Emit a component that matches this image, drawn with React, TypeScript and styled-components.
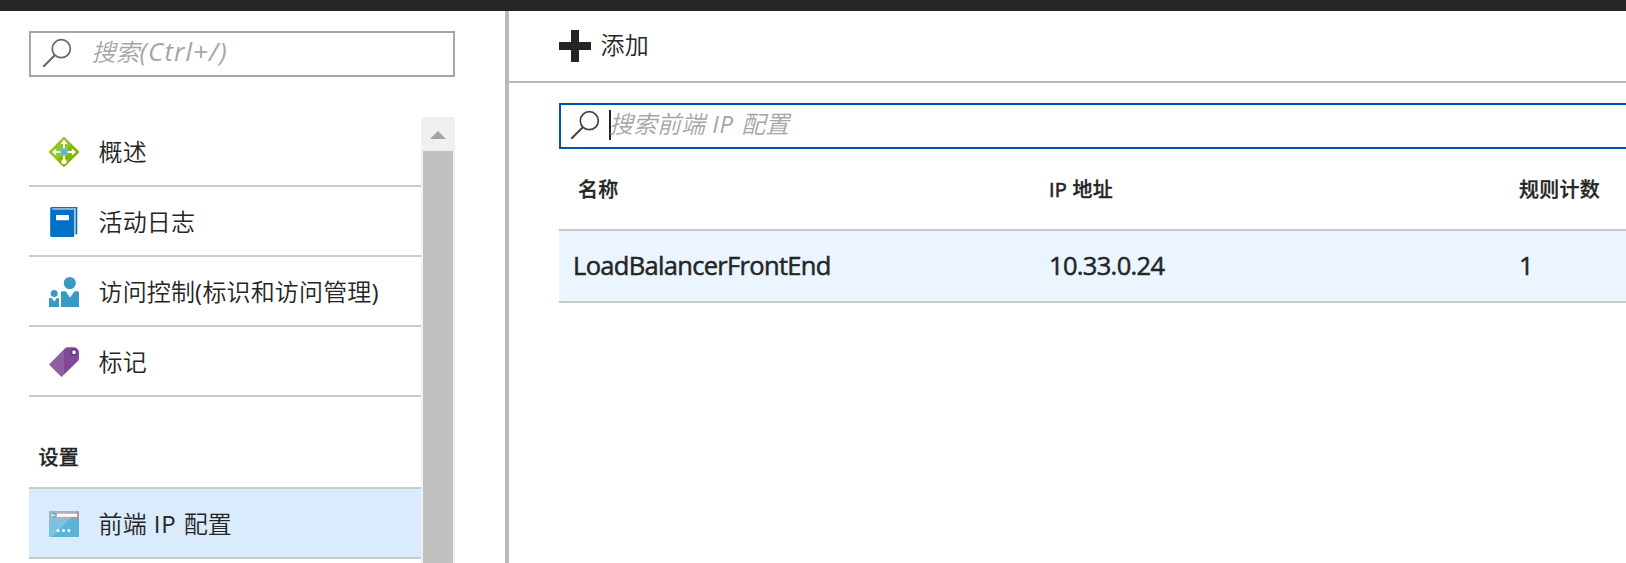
import React from "react";
import styled, { createGlobalStyle } from "styled-components";

const GlobalStyle = createGlobalStyle`
  * { box-sizing: border-box; }
  body {
    margin: 0;
    background: #fff;
    color: #252525;
    font-family: "Open Sans", "Noto Sans CJK SC", sans-serif;
    overflow: hidden;
  }
`;

const Page = styled.div`
  display: flex;
  flex-direction: column;
  width: 100%;
  height: 563px;
  overflow: hidden;
`;

const TopBar = styled.header`
  flex: 0 0 11px;
  background: #252525;
`;

const Body = styled.div`
  display: flex;
  flex: 1;
  min-height: 0;
`;

const Sidebar = styled.aside`
  display: flex;
  flex-direction: column;
  flex: 0 0 509px;
  padding: 20px 50px 0 29px;
  border-right: 4px solid #bababa;
`;

const SearchBox = styled.div<{ $focused?: boolean }>`
  display: flex;
  align-items: center;
  flex: 0 0 46px;
  border: 2px solid ${(p) => (p.$focused ? "#0055aa" : "#a6a6a6")};
  padding: 0 0 2px ${(p) => (p.$focused ? 9 : 11)}px;
  color: ${(p) => (p.$focused ? "#444" : "#666")};
`;

const Placeholder = styled.span<{ $gap: number }>`
  margin-left: ${(p) => p.$gap}px;
  padding-bottom: 2px;
  color: #a6a6a6;
  font-size: 24px;
  line-height: 30px;
  font-style: italic;
  font-weight: 350;
  white-space: pre;
`;

const Latin = styled.span<{ $spacing?: number; $size?: number }>`
  font-size: ${(p) => p.$size ?? 24}px;
  font-weight: 400;
  line-height: 1;
  letter-spacing: ${(p) => p.$spacing ?? 0}px;
`;

const Caret = styled.span`
  width: 2px;
  height: 30px;
  margin: 0 -2px 0 9px;
  background: #252525;
`;

const MenuArea = styled.div`
  display: flex;
  flex: 1;
  min-height: 0;
  margin-top: 40px;
`;

const Menu = styled.nav`
  flex: 1;
  overflow: hidden;
`;

const MenuItem = styled.div<{ $selected?: boolean }>`
  display: flex;
  align-items: center;
  gap: 19.5px;
  height: 70px;
  padding: 2px 0 0 20px;
  border-bottom: 2px solid #cacaca;
  background: ${(p) => (p.$selected ? "#d9ebfd" : "transparent")};
  font-size: 24px;
  line-height: 30px;
  font-weight: 350;
  letter-spacing: 0.15px;
  white-space: pre;
`;

const MenuHeading = styled.h2`
  margin: 0;
  height: 92px;
  padding: 46px 0 0 9.5px;
  border-bottom: 2px solid #cacaca;
  font-size: 20px;
  line-height: 30px;
  font-weight: 500;
  letter-spacing: 0.3px;
  -webkit-text-stroke: 0.3px #252525;
`;

const ScrollTrack = styled.div`
  display: flex;
  flex-direction: column;
  flex: 0 0 34px;
  padding: 0 2px;
  background: #f0f0f0;
`;

const ScrollButton = styled.div`
  display: flex;
  justify-content: center;
  flex: 0 0 34px;
  padding-top: 14px;
`;

const ScrollThumb = styled.div`
  flex: 1;
  background: #c1c1c1;
`;

const Main = styled.main`
  display: flex;
  flex-direction: column;
  flex: 1;
  min-width: 0;
`;

const Toolbar = styled.div`
  display: flex;
  align-items: center;
  gap: 9.5px;
  flex: 0 0 72px;
  padding-left: 50px;
  border-bottom: 2px solid #bababa;
  font-size: 24px;
  line-height: 30px;
  font-weight: 350;
  letter-spacing: 0.15px;
`;

const ToolbarLabel = styled.span`
  padding-bottom: 2px;
`;

const Content = styled.section`
  display: flex;
  flex-direction: column;
  margin: 20px -2px 0 50px;
`;

const TableRow = styled.div`
  display: grid;
  grid-template-columns: 490px 470px 1fr;
  align-items: center;
  height: 72px;
  padding-bottom: 2px;
  border-bottom: 2px solid #cacaca;
  background: #eaf5ff;
  font-size: 25.5px;
  line-height: 30px;
  letter-spacing: -0.68px;
  -webkit-text-stroke: 0.5px #252525;
`;

const TableHead = styled(TableRow)`
  height: 82px;
  padding: 2px 0 0;
  background: #fff;
  font-size: 20px;
  font-weight: 500;
  letter-spacing: 0.25px;
  -webkit-text-stroke: 0.3px #252525;
`;

const Cell = styled.div<{ $indent?: number }>`
  padding-left: ${(p) => p.$indent ?? 0}px;
  white-space: nowrap;
`;

const HeadLatin = styled.span`
  -webkit-text-stroke: 0.6px #252525;
`;

const SearchIcon = () => (
  <svg width="30" height="30" viewBox="0 0 30 30" fill="none" stroke="currentColor" strokeWidth="1.7">
    <circle cx="19.3" cy="10.7" r="9" />
    <path d="M12.8 17.2 1.3 28.7" strokeWidth="2" />
  </svg>
);

const PlusIcon = () => (
  <svg width="32" height="32" viewBox="0 0 32 32" fill="#252525">
    <path d="M12 0h8v12h12v8H20v12h-8V20H0v-8h12z" />
  </svg>
);

const LoadBalancerIcon = () => (
  <svg width="30" height="30" viewBox="0 0 30 30">
    <path d="M14 .4q1-.8 2 0L29.6 14q.8 1 0 2L16 29.6q-1 .8-2 0L.4 16q-.8-1 0-2z" fill="#7fba00" />
    <path d="M14 .4q1-.8 2 0L22 6.4 8.5 24.1.4 16q-.8-1 0-2z" fill="#fff" opacity=".16" />
    <path d="M15 6v18M6 15h18" stroke="#fff" strokeWidth="1.8" fill="none" />
    <g fill="#fff">
      <path d="m15 2.6 3.5 4.4h-7zM3 15l4.2-3.4v6.8zM27 15l-4.2-3.4v6.8z" />
      <circle cx="15" cy="24.6" r="2.6" />
    </g>
    <circle cx="15" cy="15" r="3.7" fill="#59b4d9" stroke="#a8d5ae" strokeWidth=".6" />
  </svg>
);

const LogIcon = () => (
  <svg width="30" height="30" viewBox="0 0 30 30">
    <path d="M3 0h25.3v27.3h-3V2H5z" fill="#0072c6" />
    <path d="M3 1h23.7v27H25V2.5H3z" fill="#c8cdd2" />
    <path d="M1.2 1.5Q1.2 0 2.8 0h25.5v1.2H4.2q-1.4.2-1.4 1.2h22.3V30H2.8q-1.6 0-1.6-1.5z" fill="#0072c6" />
    <rect x="7" y="8" width="13" height="5.3" rx=".6" fill="#fff" />
  </svg>
);

const PeopleIcon = () => (
  <svg width="30" height="30" viewBox="0 0 30 30" fill="#3999c6">
    <circle cx="20.8" cy="6.1" r="6.1" />
    <path d="M12 30V15.5q0-1.3 1.3-1.3h3.3L21 20.6l4.6-6.4h3.1q1.3 0 1.3 1.3V30z" />
    <circle cx="5.2" cy="16.5" r="3.5" />
    <path d="M0 30v-7.9q0-1 1-1h1.8l2.5 3.6 2.4-3.6H9q1 0 1 1V30z" />
  </svg>
);

const TagIcon = () => (
  <svg width="30" height="30" viewBox="0 0 30 30">
    <path d="M0 17.5 16.4 1Q17.3.2 18.5.2h7.2q.8 0 1.4.6l2.1 2.2q.8.8.8 1.7v7.1q0 1.1-.8 1.9L12.5 30z" fill="#804998" />
    <path d="M0 17.5 15 2.4v25.1L12.5 30z" fill="#fff" opacity=".12" />
    <ellipse cx="25" cy="5.3" rx="2.4" ry="2.7" fill="#fff" stroke="#56306b" strokeWidth="1.1" />
  </svg>
);

const FrontendIcon = () => (
  <svg width="30" height="30" viewBox="0 0 30 30">
    <rect y="2.2" width="30" height="25.8" rx=".6" fill="#59b4d9" />
    <path d="M.6 2.2h28.8q.6 0 .6.6V10H0V2.8q0-.6.6-.6z" fill="#a0a1a2" />
    <path d="M.6 2.2h27.2L3.2 28H.6Q0 28 0 27.4V2.8q0-.6.6-.6z" fill="#fff" opacity=".2" />
    <rect x="8" y="4.8" width="20" height="3" fill="#fff" />
    <circle cx="4.2" cy="6.3" r="3" fill="#59b4d9" />
    <path d="M2.2 6.3h4M4 4.6 2.2 6.3 4 8" stroke="#fff" fill="none" strokeWidth=".9" />
    <circle cx="9" cy="21.4" r="1.5" fill="#fff" />
    <circle cx="14.5" cy="21.4" r="1.5" fill="#fff" />
    <circle cx="19.8" cy="21.4" r="1.5" fill="#fff" />
  </svg>
);

export default function App() {
  return (
    <Page>
      <GlobalStyle />
      <TopBar />
      <Body>
        <Sidebar>
          <SearchBox>
            <SearchIcon />
            <Placeholder $gap={19.5}>
              搜索<Latin $size={26} $spacing={1.1}>(Ctrl+/)</Latin>
            </Placeholder>
          </SearchBox>
          <MenuArea>
            <Menu>
              <MenuItem><LoadBalancerIcon />概述</MenuItem>
              <MenuItem><LogIcon />活动日志</MenuItem>
              <MenuItem><PeopleIcon /><span>访问控制<Latin $spacing={0.2}>(</Latin>标识和访问管理<Latin>)</Latin></span></MenuItem>
              <MenuItem><TagIcon />标记</MenuItem>
              <MenuHeading>设置</MenuHeading>
              <MenuItem $selected><FrontendIcon /><span>前端<Latin $spacing={0.8}> IP </Latin>配置</span></MenuItem>
            </Menu>
            <ScrollTrack>
              <ScrollButton>
                <svg width="16" height="8" viewBox="0 0 16 8"><path d="M8 0l8 8H0z" fill="#a3a3a3" /></svg>
              </ScrollButton>
              <ScrollThumb />
            </ScrollTrack>
          </MenuArea>
        </Sidebar>
        <Main>
          <Toolbar><PlusIcon /><ToolbarLabel>添加</ToolbarLabel></Toolbar>
          <Content>
            <SearchBox $focused>
              <SearchIcon />
              <Caret />
              <Placeholder $gap={0}>
                搜索前端<Latin $spacing={0.9}> IP </Latin>配置
              </Placeholder>
            </SearchBox>
            <TableHead>
              <Cell $indent={19}>名称</Cell>
              <Cell><HeadLatin>IP </HeadLatin>地址</Cell>
              <Cell>规则计数</Cell>
            </TableHead>
            <TableRow>
              <Cell $indent={14}>LoadBalancerFrontEnd</Cell>
              <Cell>10.33.0.24</Cell>
              <Cell>1</Cell>
            </TableRow>
          </Content>
        </Main>
      </Body>
    </Page>
  );
}
